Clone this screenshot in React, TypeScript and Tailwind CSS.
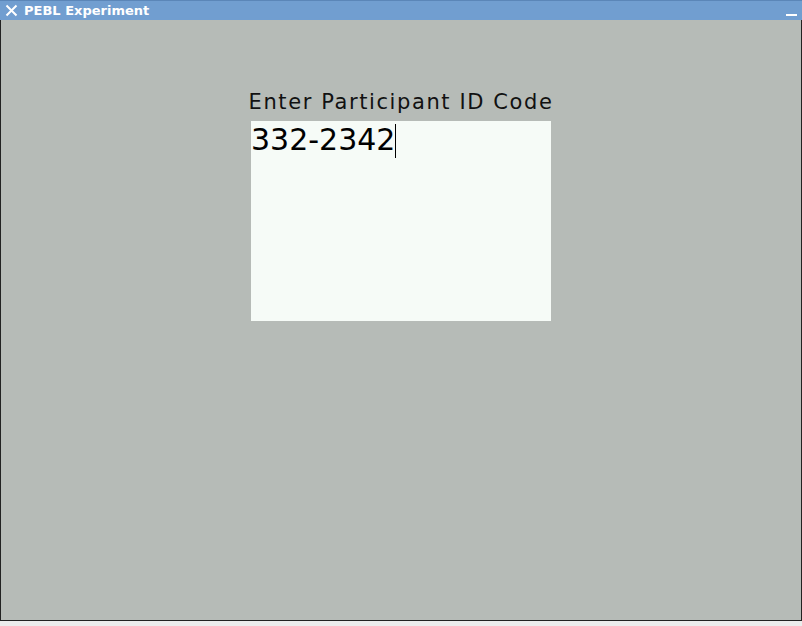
export default function App() {
	return (
		<div className="w-[802px] h-[626px] bg-[#ececec] flex flex-col overflow-hidden" style={{ fontFamily: '"DejaVu Sans", sans-serif' }}>
			{/* Title bar */}
			<div className="h-[20px] bg-[#719ed0] border-t border-[#5b86b8] flex items-center justify-between px-[4px] text-white">
				<div className="flex items-center gap-[6px]">
					<svg width="13" height="13" viewBox="0 0 13 13" className="ml-[1px]">
						<path d="M1.5 1.5 L11.5 11.5 M11.5 1.5 L1.5 11.5" stroke="white" strokeWidth="2" />
					</svg>
					<span className="text-[13px] font-bold leading-none">PEBL Experiment</span>
				</div>
				<div className="w-[11px] h-[2px] bg-white mt-[8px] mr-[1px]" />
			</div>
			{/* Window body */}
			<div className="h-[601px] bg-[#b6bbb7] border-x border-b border-[#222] flex flex-col items-center">
				<div className="mt-[70px] text-[21px] leading-[25px] tracking-[1.6px] text-[#111]">
					Enter Participant ID Code
				</div>
				<div className="mt-[6px] w-[300px] h-[200px] bg-[#f6fbf7] flex items-start">
					<span className="text-[30px] leading-[36px] text-black mt-[1px]">332-2342</span>
					<div className="w-[1px] h-[34px] bg-black mt-[3px]" />
				</div>
			</div>
		</div>
	);
}
